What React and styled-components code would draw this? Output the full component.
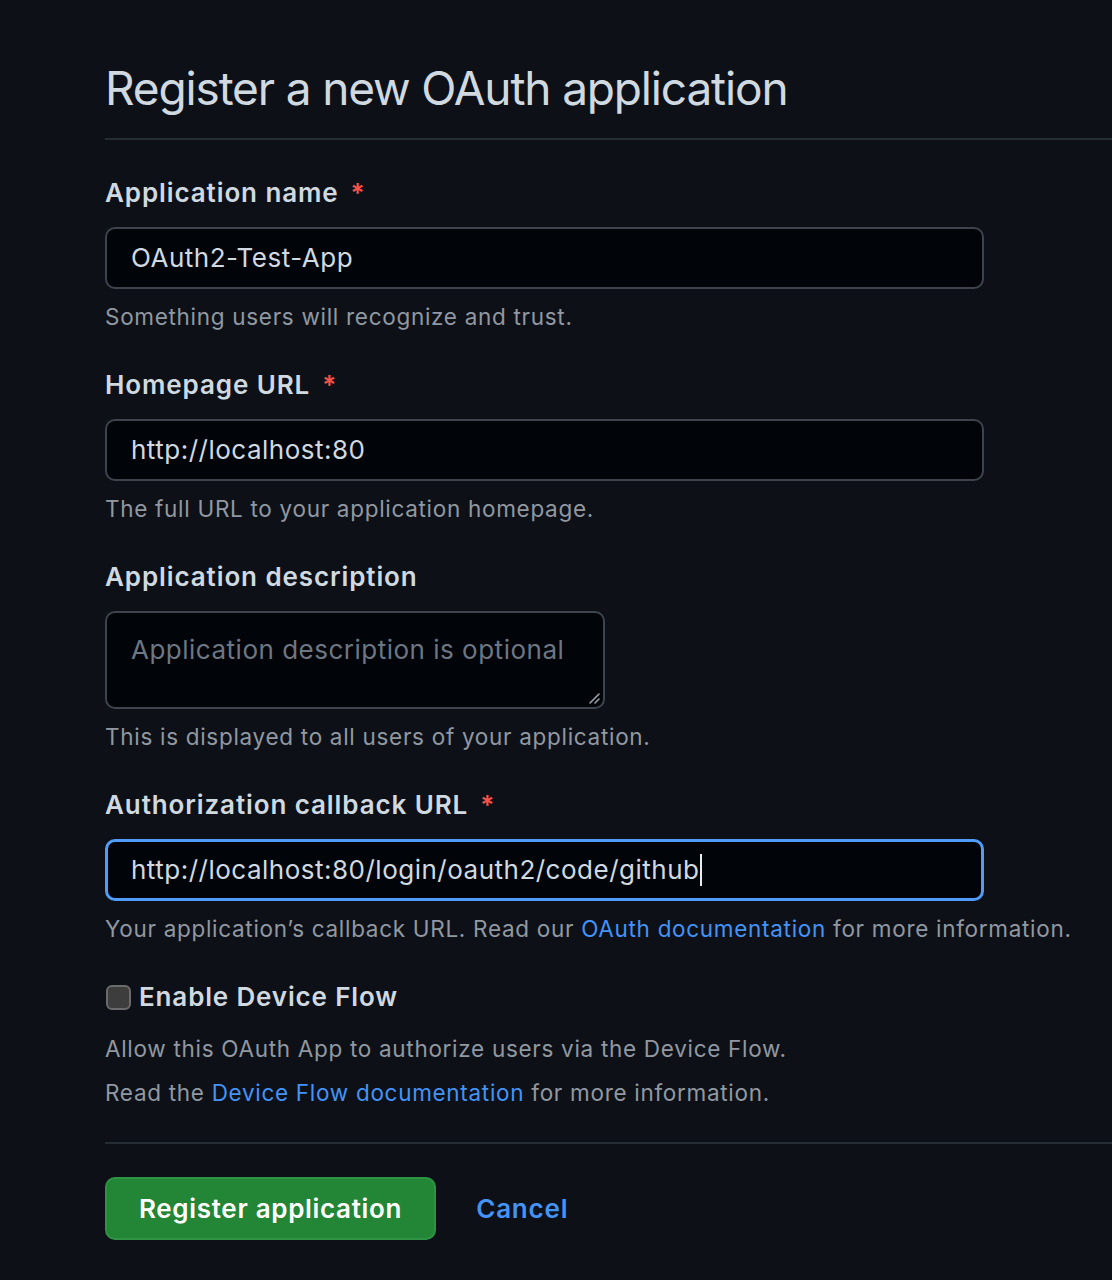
import React from "react";
import styled, { createGlobalStyle } from "styled-components";

const Global = createGlobalStyle`
  html, body { margin: 0; padding: 0; background: #0d1117; color-scheme: dark; }
  body { font-family: Inter, "Noto Sans", "Liberation Sans", sans-serif; -webkit-font-smoothing: antialiased; }
  * { box-sizing: border-box; }
`;

const Page = styled.div`
  min-height: 1280px;
  padding: 60px 0 40px 105px;
  overflow: hidden;
  background: #0d1117;
`;

const Title = styled.h1`
  margin: 0;
  font-size: 46px;
  line-height: 56px;
  font-weight: 400;
  color: #d1d9e0;
  letter-spacing: -1.15px;
  padding-bottom: 22px;
`;

const Divider = styled.hr`
  margin: 0;
  border: none;
  height: 2px;
  background: #262c34;
  width: calc(100% + 40px);
`;

const Form = styled.form`
  display: flex;
  flex-direction: column;
  padding-top: ${(p) => p.$top || 0}px;
`;

const Group = styled.div`
  display: flex;
  flex-direction: column;
  margin-bottom: 35px;
`;

const Label = styled.label`
  font-size: 26px;
  line-height: 34px;
  font-weight: 600;
  letter-spacing: 0.9px;
  color: #d1d9e0;
  margin-bottom: 17px;
  display: flex;
  gap: 12px;
`;

const Required = styled.span`
  color: #f85149;
`;

const Field = styled.div`
  position: relative;
  width: ${(p) => p.$width || 879}px;
  height: ${(p) => p.$height || 62}px;
  background: #010409;
  border: ${(p) => (p.$focus ? "3px solid #4f9cf9" : "2px solid #3d444d")};
  border-radius: 10px;
  padding: 0 ${(p) => (p.$focus ? 23 : 24)}px;
  display: flex;
  align-items: ${(p) => (p.$multiline ? "flex-start" : "center")};
  padding-top: ${(p) => (p.$multiline ? "20px" : "0")};
  font-size: 26px;
  line-height: 34px;
  letter-spacing: 0.5px;
  color: ${(p) => (p.$placeholder ? "#6e7681" : "#d1d9e0")};
`;

const Caret = styled.span`
  display: inline-block;
  width: 2px;
  height: 32px;
  background: #e6edf3;
  margin-left: 1px;
`;

const Grip = styled.svg`
  position: absolute;
  right: 3px;
  bottom: 3px;
  width: 13px;
  height: 13px;
`;

const Help = styled.p`
  margin: 12px 0 0;
  font-size: 22.5px;
  line-height: 32px;
  letter-spacing: 0.7px;
  color: #9198a1;
`;

const Link = styled.a`
  color: #4493f8;
  text-decoration: none;
`;

const CancelLink = styled.a`
  color: #4493f8;
  text-decoration: none;
  font-size: 26px;
  font-weight: 600;
  letter-spacing: 0.8px;
`;

const CheckRow = styled.label`
  display: flex;
  align-items: center;
  gap: 8px;
  font-size: 26px;
  line-height: 34px;
  font-weight: 600;
  letter-spacing: 0.85px;
  color: #d1d9e0;
  margin-bottom: 7px;
`;

const Box = styled.span`
  width: 25px;
  height: 25px;
  border-radius: 6px;
  background: #3d3d3d;
  border: 2px solid #6b6b6b;
  flex-shrink: 0;
  margin-left: 1px;
`;

const Actions = styled.div`
  display: flex;
  align-items: center;
  gap: 40px;
  padding-top: 33px;
`;

const Button = styled.button`
  height: 63px;
  padding: 0 32px;
  background: #238636;
  border: 2px solid #2e9444;
  border-radius: 10px;
  color: #ffffff;
  font-family: inherit;
  font-size: 26px;
  font-weight: 600;
  letter-spacing: 0.68px;
  cursor: pointer;
`;

const DeviceBlock = styled.div`
  display: flex;
  flex-direction: column;
  margin-bottom: 33px;
`;

export default function App() {
  return (
    <>
      <Global />
      <Page>
        <Title>Register a new OAuth application</Title>
        <Divider />
        <Form $top={36}>
          <Group>
            <Label>
              Application name <Required>*</Required>
            </Label>
            <Field>OAuth2-Test-App</Field>
            <Help>Something users will recognize and trust.</Help>
          </Group>
          <Group>
            <Label>
              Homepage URL <Required>*</Required>
            </Label>
            <Field>http://localhost:80</Field>
            <Help>The full URL to your application homepage.</Help>
          </Group>
          <Group>
            <Label>Application description</Label>
            <Field $width={500} $height={98} $multiline $placeholder>
              Application description is optional
              <Grip viewBox="0 0 13 13">
                <path d="M12 3 L3 12 M12 8 L8 12" stroke="#9aa0a6" strokeWidth="1.6" strokeLinecap="round" />
              </Grip>
            </Field>
            <Help>This is displayed to all users of your application.</Help>
          </Group>
          <Group>
            <Label>
              Authorization callback URL <Required>*</Required>
            </Label>
            <Field $focus>
              http://localhost:80/login/oauth2/code/github
              <Caret />
            </Field>
            <Help>
              Your application’s callback URL. Read our <Link href="#">OAuth documentation</Link> for more
              information.
            </Help>
          </Group>
          <DeviceBlock>
            <CheckRow>
              <Box />
              Enable Device Flow
            </CheckRow>
            <Help>Allow this OAuth App to authorize users via the Device Flow.</Help>
            <Help>
              Read the <Link href="#">Device Flow documentation</Link> for more information.
            </Help>
          </DeviceBlock>
        </Form>
        <Divider />
        <Actions>
          <Button type="button">Register application</Button>
          <CancelLink href="#">Cancel</CancelLink>
        </Actions>
      </Page>
    </>
  );
}
